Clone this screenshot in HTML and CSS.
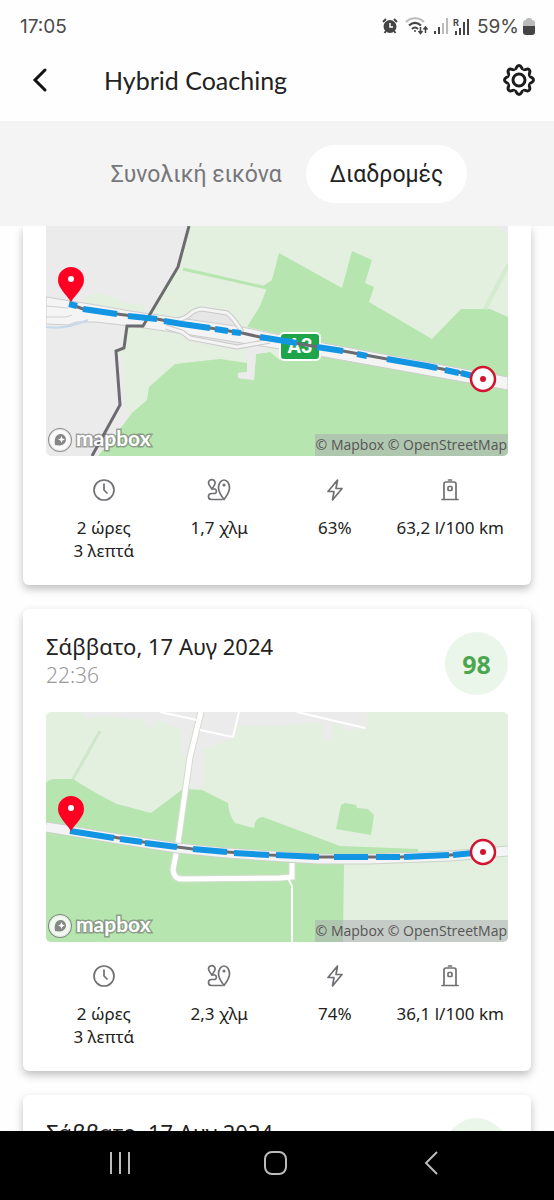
FILE: index.html
```html
<!DOCTYPE html>
<html lang="el">
<head>
    <meta charset="UTF-8">
    <meta name="viewport" content="width=device-width, initial-scale=1.0">
    <title>Hybrid Coaching</title>
    <link rel="stylesheet" href="styles.css">
</head>
<body>

    <!-- shared icons -->
    <svg class="sprite" aria-hidden="true">
        <symbol id="icon-clock" viewBox="0 0 24 24">
            <circle cx="12" cy="12" r="10"/>
            <path d="M12 6v6l3 3"/>
        </symbol>
        <symbol id="icon-route" viewBox="0 0 24 24">
            <path d="M17 21.500c-3-4-5.500-7.500-5.500-11.500a5.500 8 0 0 1 11 0c0 4-2.500 7.500-5.500 11.500z"/>
            <circle cx="17" cy="7" r=".7"/>
            <path d="M5 11C3 8.500 1.500 7 1.500 5a3.300 3.300 0 0 1 6.600 0C8 7 6.500 8.500 5 11z"/>
            <path d="M5 11h3a2.500 2.500 0 0 1 0 4.500H4.500a3 3 0 0 0 0 6H15"/>
        </symbol>
        <symbol id="icon-bolt" viewBox="0 0 24 24">
            <path d="M14.500 2L5 13.500h6L9.500 22 19 10.500h-6z"/>
        </symbol>
        <symbol id="icon-fuel" viewBox="0 0 24 24">
            <path d="M10.500 2h3M6 21.500V6a2 2 0 0 1 2-2h8a2 2 0 0 1 2 2v15.500M4 21.500h16"/>
            <rect x="10" y="8.500" width="4" height="4" rx="1"/>
        </symbol>
        <symbol id="pin" viewBox="0 0 28 36">
            <path d="M14 0a13 13 0 0 1 13 13c0 8-8 14-13 22C9 27 1 21 1 13A13 13 0 0 1 14 0z" fill="#ff0022"/>
            <circle cx="14" cy="12" r="3" fill="#fff"/>
        </symbol>
        <symbol id="target" viewBox="0 0 28 28">
            <circle cx="14" cy="14" r="12" fill="#fff" stroke="#d4142f" stroke-width="2.500"/>
            <circle cx="14" cy="14" r="3" fill="#d4142f"/>
        </symbol>
        <symbol id="mapbox-mark" viewBox="0 0 26 26">
            <circle cx="13" cy="13" r="11" fill="#fff" fill-opacity=".8" stroke="#666" stroke-opacity=".7" stroke-width="2"/>
            <path d="M8 18c-1-5 0-11 6-11a5.500 5.500 0 0 1 5 6c-1 6-7 6-11 5z" fill="#555" fill-opacity=".7"/>
            <path d="M14.500 9l1 2.500 2.500 1-2.500 1-1 2.500-1-2.500-2.500-1 2.500-1z" fill="#fff"/>
        </symbol>
    </svg>

    <div class="status-bar">
        <span>17:05</span>
        <div class="status-icons">
            <svg width="16" height="16" viewBox="0 0 16 16">
                <circle cx="8" cy="8.500" r="6.500" fill="#444"/>
                <path d="M1 4l3-3M15 4l-3-3M4 13l-1.500 2M12 13l1.500 2" stroke="#444" stroke-width="2"/>
                <path d="M8 5v4h3" fill="none" stroke="#fff" stroke-width="1.500"/>
            </svg>
            <svg class="wifi" width="24" height="18" viewBox="0 0 24 18" fill="none" stroke-width="2">
                <path d="M1 5c5-5 13-5 18 0" stroke="#bbb"/>
                <path d="M4 8.500c4-3.500 8-3.500 12 0M7 12c2-2 4-2 6 0" stroke="#444"/>
                <circle cx="10" cy="14" r="1" fill="#444" stroke="none"/>
                <path d="M15.500 10v6M13.500 14l2 2.500 2-2.500M20.500 16v-6M18.500 12.500l2-2.500 2 2.500" stroke="#444" stroke-width="1.500"/>
            </svg>
            <svg width="16" height="16" viewBox="0 0 16 16" stroke-width="2">
                <path d="M2 13v3M6 9v7" stroke="#444"/>
                <path d="M10 5v11M14 0v16" stroke="#bbb"/>
            </svg>
            <svg class="roaming" width="17" height="17" viewBox="0 0 17 17">
                <path d="M3 13v4M7 10v7M11 4v13M15 1v16" stroke="#444" stroke-width="2"/>
                <text x="0" y="8" font-size="9" font-weight="700" fill="#444">R</text>
            </svg>
            <span>59%</span>
            <svg width="12" height="17" viewBox="0 0 12 17">
                <path d="M3 2q0-2 2-2h2q2 0 2 2 3 0 3 3v4H0V5q0-3 3-3z" fill="#bbb"/>
                <path d="M0 8h12v6q0 3-3 3H3q-3 0-3-3z" fill="#444"/>
            </svg>
        </div>
    </div>

    <header class="app-bar">
        <button class="icon-button" type="button" aria-label="Πίσω">
            <svg width="32" height="32" viewBox="0 0 32 32">
                <path d="M21 6L11 16l10 10" fill="none" stroke="#111" stroke-width="3" stroke-linecap="round"/>
            </svg>
        </button>
        <h1>Hybrid Coaching</h1>
        <button class="icon-button" type="button" aria-label="Ρυθμίσεις">
            <svg width="34" height="34" viewBox="-17 -17 34 34" fill="none" stroke="#1c1c1c" stroke-width="3">
                <path id="tooth" d="M-4.600-11C-2-10.500-3.200-14.500 0-14.500S2-10.500 4.600-11"/>
                <use href="#tooth" transform="rotate(45)"/>
                <use href="#tooth" transform="rotate(90)"/>
                <use href="#tooth" transform="rotate(135)"/>
                <use href="#tooth" transform="rotate(180)"/>
                <use href="#tooth" transform="rotate(225)"/>
                <use href="#tooth" transform="rotate(270)"/>
                <use href="#tooth" transform="rotate(315)"/>
                <circle r="6"/>
            </svg>
        </button>
    </header>

    <nav class="tabs">
        <button class="tab" type="button">Συνολική εικόνα</button>
        <button class="tab active" type="button">Διαδρομές</button>
    </nav>

    <main class="trips">

        <article class="card card-cut">
            <div class="map">
                <svg viewBox="0 0 462 230" fill="none">
                    <rect width="462" height="230" fill="#ebebeb"/>
                    <path d="M144 0H462V230H64L46 230 74 190V179L70 125 78 122 81 100H97L132 42z" fill="#e3efdf"/>
                    <path d="M46 230L74 179 72 128 76 128 79 180 84 192 52 230z" fill="#ebebeb"/>
                    <path d="M38 72q15-8 30 0t30 6v12L38 80z" fill="#e3efdf"/>
                    <path d="M201 101L214 80 221 62 217 60 226 54 233 27 296 62 306 25 326 34 319 57 328 61 323 76 386 113 415 83H444L462 91V160z" fill="#b6e5af"/>
                    <path d="M52 230L71 207 86 187 101 174 103 161 129 138 174 133 201 137V146L192 147V152L208 154 210 128 224 126 234 134 236 118 462 160V230z" fill="#b6e5af"/>
                    <path d="M201 137V146L192 147V152L208 154 210 128 224 126 215 118 201 120z" fill="#ebebeb"/>
                    <path d="M137 43L221 62" stroke="#b6e5af" stroke-width="3"/>
                    <path d="M439 83L462 39" stroke="#d3ebce" stroke-width="4"/>
                    <path d="M450 0Q456 6 462 7V0z" fill="#ebebeb"/>
                    <path d="M126 99L151 82 181 87 202 108 224 118 191 124 144 116z" fill="#e6e6e6"/>
                    <path d="M0 71L50 79 84 85 126 91 196 101 234 109 462 151V164L234 123 196 117 126 106 84 100 50 96H30L22 99 0 98z" fill="#f4f4f5" stroke="#cdcdcd"/>
                    <path d="M0 80L22 82M0 91H20L26 89" stroke="#d0d0d0"/>
                    <path d="M0 101Q18 104 42 94" stroke="#c5d8ec" stroke-width="2"/>
                    <path d="M132 94Q140 92 144 88T156 83L181 87Q188 92 196 106M120 101L136 106 144 112 191 121 224 115" stroke="#c9c9c9" stroke-width="5"/>
                    <path d="M132 94Q140 92 144 88T156 83L181 87Q188 92 196 106M120 101L136 106 144 112 191 121 224 115" stroke="#f4f4f5" stroke-width="3"/>
                    <path d="M143 0L132 41 97 100H81L78 122 70 125 74 179 46 230" stroke="#6b6b70" stroke-width="3"/>
                    <rect x="234" y="107" width="40" height="27" rx="4" fill="#1ea54a" stroke="#fff" stroke-width="2"/>
                    <text class="shield" x="254" y="127" text-anchor="middle">A3</text>
                    <path d="M24 78L37 83 71 88 111 93 136 98 164 102 196 107 214 111 254 118 297 125 341 133 381 140 437 151" stroke="#6b6b70" stroke-width="3"/>
                    <path class="driven" d="M23 78L31 80M37 83L71 88M82 90L111 93M118 95L136 98 164 102M169 103L182 105M186 106L195 107M214 111L251 117M271 121L297 125M311 128L321 130M341 133L381 140 391 142M399 144L413 147M415 147L427 150"/>
                    <use href="#pin" x="11" y="41" width="28" height="36"/>
                    <use href="#target" x="423" y="139" width="28" height="28"/>
                </svg>
                <div class="map-logo">
                    <svg width="26" height="26"><use href="#mapbox-mark"/></svg>
                    <span>mapbox</span>
                </div>
                <div class="map-credit">© Mapbox © OpenStreetMap</div>
            </div>
            <ul class="stats">
                <li><svg><use href="#icon-clock"/></svg>2 ώρες<br>3 λεπτά</li>
                <li><svg><use href="#icon-route"/></svg>1,7 χλμ</li>
                <li><svg><use href="#icon-bolt"/></svg>63%</li>
                <li><svg><use href="#icon-fuel"/></svg>63,2 l/100 km</li>
            </ul>
        </article>

        <article class="card">
            <div class="card-header">
                <div>
                    <h2>Σάββατο, 17 Αυγ 2024</h2>
                    <p class="time">22:36</p>
                </div>
                <div class="score">98</div>
            </div>
            <div class="map">
                <svg viewBox="0 0 462 230" fill="none">
                    <rect width="462" height="230" fill="#e3efdf"/>
                    <path d="M34 0H321V16L297 18 288 10 284 28H278L276 10 214 14 193 12 187 26 157 38V76H137L142 50 136 38V18L112 8 104 16 96 8 60 4 40 6z" fill="#ebebeb"/>
                    <path d="M27 67L54 19" stroke="#cfe6ca" stroke-width="3"/>
                    <path d="M0 71Q3 67 10 67H27Q50 82 71 92L105 101 137 77 156 78 182 91Q183 103 189 111L208 116Q209 105 217 105L294 134 372 137V144L298 150 297 230H0z" fill="#b6e5af"/>
                    <path d="M290 117L295 93 299 91 310 93 311 96 322 97 328 103 325 123z" fill="#b6e5af"/>
                    <path d="M155 0L144 45 132 131 127 158Q128 167 136 167L234 166 246 165V151" stroke="#d4dccf" stroke-width="7"/>
                    <path d="M155 0L144 45 132 131 127 158Q128 167 136 167L234 166 246 165V151" stroke="#fff" stroke-width="5"/>
                    <path d="M114 0L151 8M154 18L187 25 193 0M251 0L319 16M242 166L246 174V230" stroke="#fff" stroke-width="2"/>
                    <path d="M0 115L67 126 131 136 181 141 224 144 272 147 322 147 404 144 462 139" stroke="#cbd3c8" stroke-width="11"/>
                    <path d="M0 115L67 126 131 136 181 141 224 144 272 147 322 147 404 144 462 139" stroke="#f4f4f6" stroke-width="9"/>
                    <path d="M24 119L67 125 97 130 131 135 147 137 181 140 224 143 272 145 354 145 404 143 437 141" stroke="#6b6b70" stroke-width="3"/>
                    <path class="driven" d="M24 119L68 126M74 127L96 130M99 131L131 135M147 137L181 140M188 141L223 143M230 143L273 145M288 145H322M330 145H354M358 145L403 143M407 143L427 141"/>
                    <use href="#pin" x="11" y="84" width="28" height="36"/>
                    <use href="#target" x="423" y="126" width="28" height="28"/>
                </svg>
                <div class="map-logo">
                    <svg width="26" height="26"><use href="#mapbox-mark"/></svg>
                    <span>mapbox</span>
                </div>
                <div class="map-credit">© Mapbox © OpenStreetMap</div>
            </div>
            <ul class="stats">
                <li><svg><use href="#icon-clock"/></svg>2 ώρες<br>3 λεπτά</li>
                <li><svg><use href="#icon-route"/></svg>2,3 χλμ</li>
                <li><svg><use href="#icon-bolt"/></svg>74%</li>
                <li><svg><use href="#icon-fuel"/></svg>36,1 l/100 km</li>
            </ul>
        </article>

        <article class="card">
            <div class="card-header">
                <div>
                    <h2>Σάββατο, 17 Αυγ 2024</h2>
                </div>
                <div class="score"></div>
            </div>
        </article>

    </main>

    <footer class="nav-bar">
        <button type="button" aria-label="Πρόσφατα">
            <svg width="26" height="26" viewBox="0 0 26 26"><path d="M4 2v22M13 2v22M22 2v22"/></svg>
        </button>
        <button type="button" aria-label="Αρχική">
            <svg width="26" height="26" viewBox="0 0 26 26"><rect x="1" y="2" width="21" height="22" rx="7"/></svg>
        </button>
        <button type="button" aria-label="Επιστροφή">
            <svg width="26" height="26" viewBox="0 0 26 26"><path d="M16 2L5 13l11 11"/></svg>
        </button>
    </footer>

</body>
</html>
```
FILE: styles.css
```css
* {
    box-sizing: border-box;
}
body {
    font-family: "Noto Sans", sans-serif;
    background-color: #fefefe;
    color: #222;
    margin: 0;
    height: 100vh;
    display: flex;
    flex-direction: column;
}
button {
    font: inherit;
    border: none;
    background: none;
    padding: 0;
}
svg {
    display: block;
}
.sprite {
    position: absolute;
    width: 0;
    height: 0;
}

/* top */
.status-bar {
    display: flex;
    justify-content: space-between;
    align-items: center;
    height: 40px;
    padding: 12px 19px 0 20px;
    font-family: Inter, sans-serif;
    font-size: 19px;
    color: #4a4a4a;
}
.status-icons {
    display: flex;
    align-items: center;
    gap: 4px;
}
.status-icons .wifi {
    margin-left: 3px;
}
.status-icons .roaming {
    margin-right: 3px;
}
.app-bar {
    display: flex;
    align-items: center;
    height: 81px;
    padding: 0 18px 2px 24px;
}
.app-bar h1 {
    flex: 1;
    margin: 0 0 0 48px;
    font-family: Lato, sans-serif;
    font-size: 25px;
    font-weight: 400;
    line-height: 32px;
}
.tabs {
    display: flex;
    justify-content: center;
    align-items: center;
    height: 105px;
    flex-shrink: 0;
    background-color: #f4f4f4;
}
.tab {
    height: 58px;
    padding: 2px 24px 0;
    border-radius: 29px;
    font-family: Roboto, sans-serif;
    font-size: 23px;
    color: #77777b;
}
.tab.active {
    background-color: #fff;
    color: #222;
}

/* trip list */
.trips {
    flex: 1;
    min-height: 0;
    overflow: hidden;
    padding: 0 23px;
}
.card {
    margin-bottom: 24px;
    padding: 23px;
    border-radius: 6px;
    background-color: #fff;
    box-shadow: 0 4px 8px rgba(0, 0, 0, 0.25);
}
.card-cut {
    padding-top: 0;
    border-radius: 0 0 6px 6px;
}
.card-header {
    display: flex;
    justify-content: space-between;
    margin-bottom: 17px;
}
.card-header h2 {
    margin: 0;
    font-size: 22px;
    font-weight: 400;
    line-height: 28px;
}
.time {
    margin: 0;
    font-size: 21px;
    font-weight: 300;
    line-height: 30px;
    color: #999;
}
.score {
    display: flex;
    justify-content: center;
    align-items: center;
    width: 63px;
    height: 63px;
    border-radius: 50%;
    background-color: #ebf6eb;
    color: #4ba64f;
    font-size: 25px;
    font-weight: 700;
}

/* maps */
.map {
    position: relative;
    border-radius: 5px;
    overflow: hidden;
}
.card-cut .map {
    border-radius: 0 0 5px 5px;
}
.map > svg {
    width: 100%;
}
.shield {
    fill: #fff;
    font-family: Roboto, sans-serif;
    font-size: 20px;
    font-weight: 700;
}
.driven {
    stroke: #1296e3;
    stroke-width: 6;
    stroke-linejoin: round;
}
.map-logo {
    position: absolute;
    left: 1px;
    bottom: 3px;
    display: flex;
    align-items: center;
    gap: 3px;
    font-family: Lato, sans-serif;
    font-size: 21px;
    font-weight: 700;
    line-height: 24px;
    color: #fff;
    -webkit-text-stroke: 3px rgba(110, 110, 110, 0.6);
    paint-order: stroke fill;
}
.map-logo span {
    padding-bottom: 3px;
}
.map-credit {
    position: absolute;
    right: 0;
    bottom: 0;
    padding: 0 1px;
    background-color: rgba(170, 170, 175, 0.5);
    color: #555;
    font-family: "Open Sans", sans-serif;
    font-size: 14px;
    line-height: 22px;
}

/* stats */
.stats {
    display: grid;
    grid-template-columns: repeat(4, 1fr);
    list-style: none;
    margin: 22px 0 0;
    padding: 0;
    text-align: center;
    font-size: 17px;
    line-height: 23px;
    white-space: nowrap;
}
.stats svg {
    width: 24px;
    height: 24px;
    margin: 0 auto 14px;
    fill: none;
    stroke: #707074;
    stroke-width: 1.7;
    stroke-linecap: round;
    stroke-linejoin: round;
}

/* system buttons */
.nav-bar {
    display: flex;
    flex-shrink: 0;
    height: 69px;
    padding: 19px 42px 24px;
    background-color: #000;
}
.nav-bar button {
    flex: 1;
}
.nav-bar svg {
    margin: 0 auto;
    fill: none;
    stroke: #bbb;
    stroke-width: 2;
}
```
